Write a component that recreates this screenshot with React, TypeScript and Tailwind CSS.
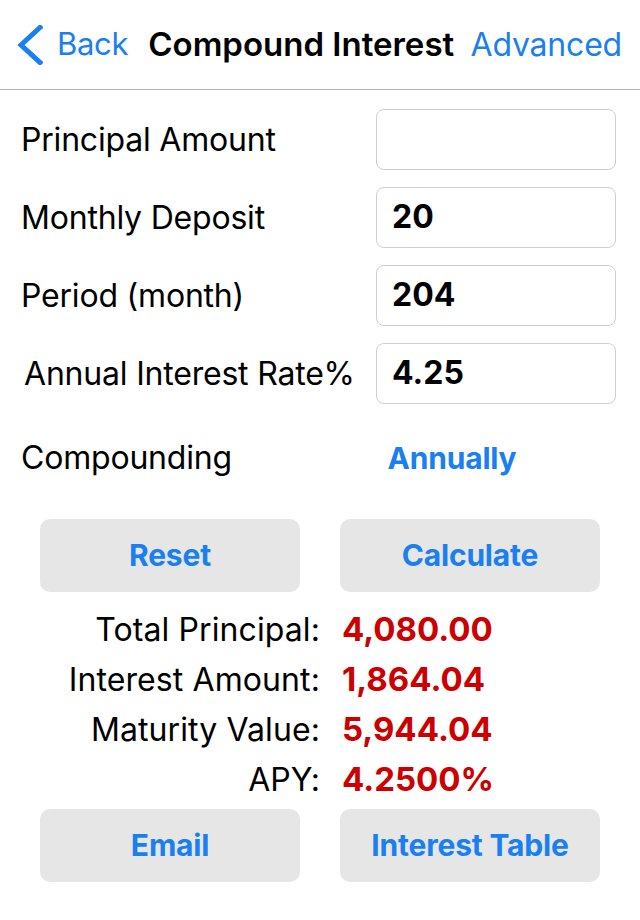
import React from 'react';

const font = { fontFamily: 'Inter, "Noto Sans", sans-serif' };

const inputs = [
  { label: 'Principal Amount', value: '' },
  { label: 'Monthly Deposit', value: '20' },
  { label: 'Period (month)', value: '204' },
  { label: 'Annual Interest Rate%', value: '4.25' },
];

const results = [
  { label: 'Total Principal:', value: '4,080.00' },
  { label: 'Interest Amount:', value: '1,864.04' },
  { label: 'Maturity Value:', value: '5,944.04' },
  { label: 'APY:', value: '4.2500%' },
];

const GrayButton: React.FC<{ text: string }> = ({ text }) => (
  <button className="w-[260px] h-[73px] rounded-[10px] bg-[#e6e6e6] text-[#1a7ff0] text-[30px] font-bold tracking-[-0.2px]">
    {text}
  </button>
);

export default function App() {
  return (
    <div className="w-[640px] h-[920px] bg-white text-black overflow-hidden" style={font}>
      {/* Nav bar */}
      <header className="h-[90px] border-b border-[#b2b2b2] flex items-center pl-[17px] pr-[18px]">
        <svg width="26" height="40" viewBox="0 0 26 40" className="shrink-0">
          <polyline points="23,2.5 4,20 23,37.5" fill="none" stroke="#1a7ff0" strokeWidth="5" strokeLinecap="square" strokeLinejoin="miter" />
        </svg>
        <span className="ml-[14px] text-[31px] text-[#1a7ff0] tracking-[-0.3px]">Back</span>
        <span className="ml-[20px] text-[33px] font-semibold">Compound Interest</span>
        <span className="ml-auto text-[32px] text-[#1a7ff0] tracking-[-0.2px]">Advanced</span>
      </header>

      {/* Inputs */}
      <div className="pt-[19px] flex flex-col gap-[17px]">
        {inputs.map((row, i) => (
          <div key={row.label} className="h-[61px] flex items-center">
            <div className={`flex-1 text-[32px] tracking-[-0.2px] ${i === 3 ? 'pl-[24px]' : 'pl-[21px]'}`}>{row.label}</div>
            <div className="w-[240px] h-[61px] mr-[24px] rounded-[8px] border border-[#cfcfcf] flex items-center pl-[15px] pb-[2px] text-[32px] font-bold">
              {row.value}
            </div>
          </div>
        ))}
      </div>

      {/* Compounding */}
      <div className="mt-[28px] h-[52px] flex items-center">
        <div className="w-[376px] pl-[21px] text-[32px] tracking-[-0.2px]">Compounding</div>
        <div className="w-[152px] text-center text-[30px] font-bold text-[#1a7ff0] tracking-[-0.2px]">Annually</div>
      </div>

      <div className="mt-[35px] flex gap-[40px] pl-[40px]">
        <GrayButton text="Reset" />
        <GrayButton text="Calculate" />
      </div>

      {/* Results */}
      <div className="mt-[13px] flex flex-col">
        {results.map((r) => (
          <div key={r.label} className="h-[50px] flex items-center">
            <div className="w-[320px] text-right text-[32px] tracking-[0.1px]">{r.label}</div>
            <div className="pl-[22px] text-[33px] font-bold text-[#cc0000]">{r.value}</div>
          </div>
        ))}
      </div>

      <div className="mt-[4px] flex gap-[40px] pl-[40px]">
        <GrayButton text="Email" />
        <GrayButton text="Interest Table" />
      </div>
    </div>
  );
}
